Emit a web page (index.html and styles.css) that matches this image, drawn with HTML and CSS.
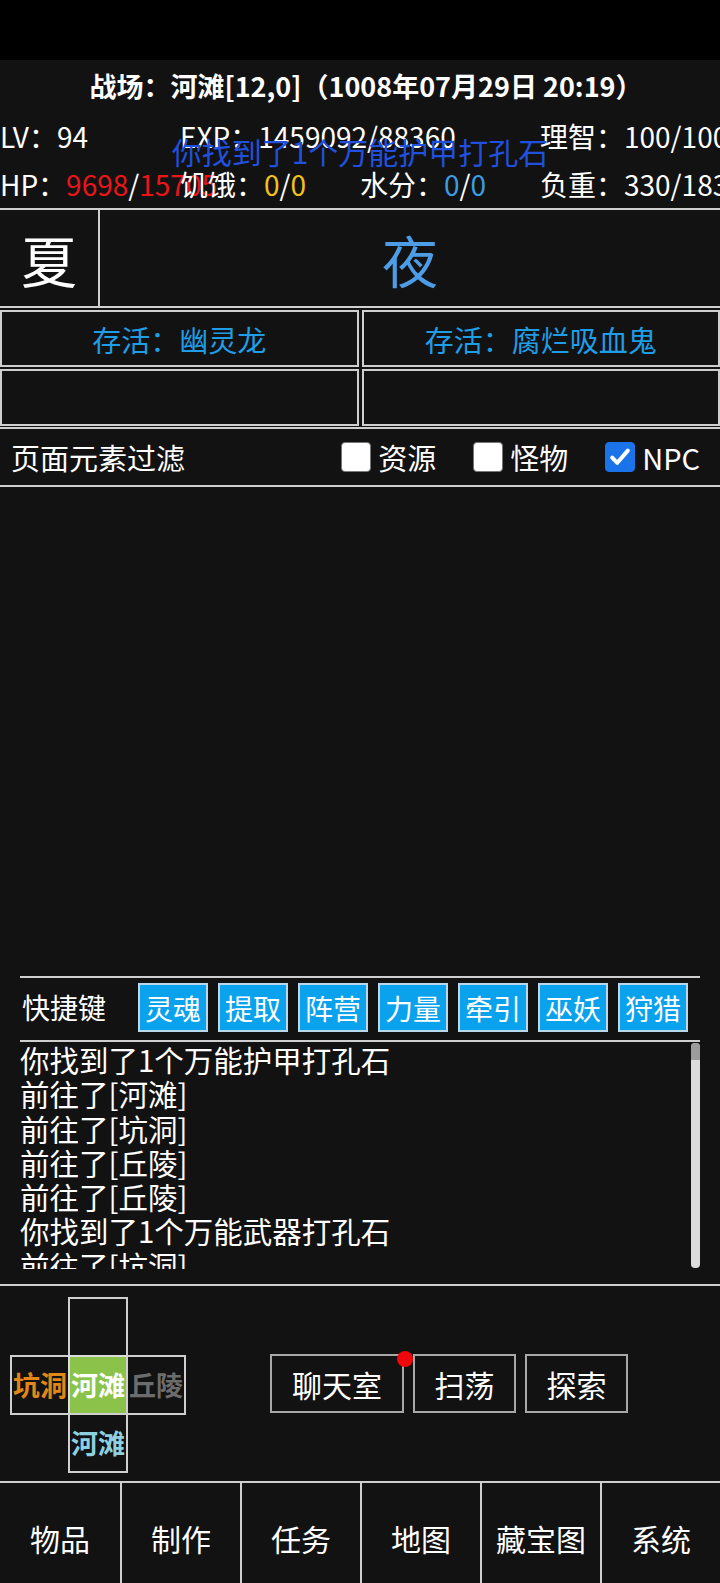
FILE: index.html
```html
<!DOCTYPE html>
<html lang="zh-CN">
<head>
<meta charset="utf-8">
<title>战场</title>
<link rel="stylesheet" href="styles.css">
</head>
<body>
<div class="statusbar"></div>
<header class="head">
  <div class="title">战场：河滩[12,0]（1008年07月29日 20:19）</div>
  <div class="stats">
    <div class="stat">LV：94</div>
    <div class="stat">EXP：1459092/88360</div>
    <div class="stat"></div>
    <div class="stat">理智：100/100</div>
    <div class="stat">HP：<span class="red">9698</span>/<span class="red">15705</span></div>
    <div class="stat">饥饿：<span class="yellow">0</span>/<span class="yellow">0</span></div>
    <div class="stat">水分：<span class="blue">0</span>/<span class="blue">0</span></div>
    <div class="stat">负重：330/1830</div>
  </div>
  <div class="toast">你找到了1个万能护甲打孔石</div>
</header>

<section class="season">
  <div class="season-cell">夏</div>
  <div class="time-cell">夜</div>
</section>

<section class="alive">
  <div class="alive-cell">存活：幽灵龙</div>
  <div class="alive-cell">存活：腐烂吸血鬼</div>
  <div class="alive-cell"></div>
  <div class="alive-cell"></div>
</section>

<section class="filter">
  <div class="filter-label">页面元素过滤</div>
  <div class="filter-opts">
    <label class="opt"><span class="box"></span>资源</label>
    <label class="opt"><span class="box"></span>怪物</label>
    <label class="opt"><span class="box checked"><svg viewBox="0 0 24 24" width="24" height="24"><path d="M4.2 12.6 L9.3 17.8 L19.8 5.6" fill="none" stroke="#fff" stroke-width="4" stroke-linecap="round" stroke-linejoin="round"/></svg></span>NPC</label>
  </div>
</section>

<section class="stage"></section>

<section class="shortcuts">
  <div class="sc-label">快捷键</div>
  <div class="sc-btns">
    <div class="sc-btn">灵魂</div>
    <div class="sc-btn">提取</div>
    <div class="sc-btn">阵营</div>
    <div class="sc-btn">力量</div>
    <div class="sc-btn">牵引</div>
    <div class="sc-btn">巫妖</div>
    <div class="sc-btn">狩猎</div>
  </div>
</section>

<section class="log">
  <div class="log-lines">
    <div>你找到了1个万能护甲打孔石</div>
    <div>前往了[河滩]</div>
    <div>前往了[坑洞]</div>
    <div>前往了[丘陵]</div>
    <div>前往了[丘陵]</div>
    <div>你找到了1个万能武器打孔石</div>
    <div>前往了[坑洞]</div>
  </div>
  <div class="scrollbar"><div class="thumb"></div></div>
</section>

<section class="mapbar">
  <div class="cross">
    <div class="cell c-top"></div>
    <div class="cell c-left">坑洞</div>
    <div class="cell c-mid">河滩</div>
    <div class="cell c-right">丘陵</div>
    <div class="cell c-bottom">河滩</div>
  </div>
  <div class="actions">
    <div class="act act-wide">聊天室<span class="dot"></span></div>
    <div class="act">扫荡</div>
    <div class="act">探索</div>
  </div>
</section>

<nav class="nav">
  <div class="nav-item">物品</div>
  <div class="nav-item">制作</div>
  <div class="nav-item">任务</div>
  <div class="nav-item">地图</div>
  <div class="nav-item">藏宝图</div>
  <div class="nav-item">系统</div>
</nav>
</body>
</html>
```

FILE: styles.css
```css
html, body {
  margin: 0;
  padding: 0;
}
body {
  width: 720px;
  height: 1583px;
  overflow: hidden;
  background: #121212;
  color: #fff;
  font-family: "Noto Sans CJK SC", "Noto Sans", sans-serif;
}
.statusbar {
  height: 60px;
  background: #000;
}
.head {
  position: relative;
  border-bottom: 2px solid #cfcfcf;
}
.title {
  height: 52px;
  line-height: 52px;
  text-align: center;
  padding-left: 12px;
  font-size: 27px;
  font-weight: 700;
  white-space: nowrap;
}
.stats {
  display: grid;
  grid-template-columns: repeat(4, 180px);
  grid-auto-rows: 48px;
}
.stat {
  font-size: 28px;
  line-height: 48px;
  white-space: nowrap;
}
.red { color: #e8161b; }
.yellow { color: #f2c21b; }
.blue { color: #3b9ce6; }
.toast {
  position: absolute;
  left: 0;
  right: 0;
  top: 73px;
  text-align: center;
  font-size: 30px;
  line-height: 36px;
  color: #2150df;
  white-space: nowrap;
}
.season {
  display: flex;
  height: 96px;
  border-bottom: 2px solid #cfcfcf;
}
.season-cell {
  width: 98px;
  border-right: 2px solid #cfcfcf;
  display: flex;
  align-items: center;
  justify-content: center;
  font-size: 56px;
}
.time-cell {
  flex: 1;
  display: flex;
  align-items: center;
  justify-content: center;
  font-size: 56px;
  color: #4d9de6;
}
.alive {
  display: grid;
  grid-template-columns: 1fr 1fr;
  grid-auto-rows: 57px;
  gap: 2px 3px;
  padding-top: 2px;
  border-bottom: 2px solid #cfcfcf;
  padding-bottom: 1px;
}
.alive-cell {
  border: 2px solid #cfcfcf;
  display: flex;
  align-items: center;
  justify-content: center;
  font-size: 29px;
  color: #1f9ee6;
}
.filter {
  display: flex;
  align-items: center;
  justify-content: space-between;
  height: 56px;
  padding: 0 20px 0 11px;
  border-bottom: 2px solid #cfcfcf;
}
.filter-label {
  font-size: 29px;
}
.filter-opts {
  display: flex;
  gap: 37px;
}
.opt {
  display: flex;
  align-items: center;
  gap: 7px;
  font-size: 29px;
}
.box {
  width: 30px;
  height: 30px;
  box-sizing: border-box;
  border-radius: 4px;
  background: #fff;
  border: 1px solid #777;
  display: flex;
  align-items: center;
  justify-content: center;
}
.box.checked {
  background: #1a73e8;
  border-color: #1a73e8;
}
.stage {
  height: 489px;
}
.shortcuts {
  margin: 0 20px;
  border-top: 2px solid #cfcfcf;
  display: flex;
  align-items: flex-start;
  height: 64px;
  box-sizing: border-box;
  padding-top: 5px;
}
.sc-label {
  font-size: 28px;
  line-height: 49px;
  padding-left: 2px;
  width: 116px;
}
.sc-btns {
  display: flex;
  gap: 10px;
}
.sc-btn {
  width: 70px;
  height: 49px;
  box-sizing: border-box;
  background: #0aa2ec;
  border: 2px solid #b9d9ea;
  display: flex;
  align-items: center;
  justify-content: center;
  font-size: 28px;
  color: #fff;
}
.log {
  margin: 0 20px;
  border-top: 2px solid #cfcfcf;
  height: 227px;
  display: flex;
  overflow: hidden;
}
.log-lines {
  flex: 1;
  font-size: 29.5px;
  line-height: 34.3px;
}
.log-lines div {
  white-space: nowrap;
}
.scrollbar {
  width: 9px;
  margin-top: 1px;
  height: 225px;
  background: #dcdcdc;
  border-radius: 4px;
  overflow: hidden;
}
.thumb {
  height: 17px;
  background: #9c9c9c;
}
.mapbar {
  border-top: 2px solid #cfcfcf;
  margin-top: 15px;
  height: 195px;
  display: flex;
  align-items: center;
}
.cross {
  display: grid;
  grid-template-columns: repeat(3, 58px);
  grid-template-rows: repeat(3, 58px);
  margin-left: 11px;
  margin-top: 2px;
}
.cell {
  margin: -1px;
  border: 2px solid #cfcfcf;
  display: flex;
  align-items: center;
  justify-content: center;
  font-size: 27px;
  font-weight: 700;
  white-space: nowrap;
}
.c-top { grid-column: 2; grid-row: 1; }
.c-left { grid-column: 1; grid-row: 2; color: #e08718; }
.c-mid { grid-column: 2; grid-row: 2; background: #8bc34a; color: #fff; border-color: #dcdcdc; }
.c-right { grid-column: 3; grid-row: 2; color: #6c6c6c; }
.c-bottom { grid-column: 2; grid-row: 3; color: #8dd0e0; }
.actions {
  display: flex;
  gap: 9px;
  margin-left: 85px;
}
.act {
  position: relative;
  width: 103px;
  height: 59px;
  box-sizing: border-box;
  border: 2px solid #a8a8a8;
  display: flex;
  align-items: center;
  justify-content: center;
  font-size: 30px;
}
.act-wide { width: 134px; }
.dot {
  position: absolute;
  right: -11px;
  top: -5px;
  width: 16px;
  height: 16px;
  border-radius: 50%;
  background: #f0070b;
}
.nav {
  border-top: 2px solid #cfcfcf;
  display: grid;
  grid-template-columns: repeat(6, 1fr);
  height: 110px;
}
.nav-item {
  display: flex;
  align-items: center;
  justify-content: center;
  border-left: 2px solid #cfcfcf;
  font-size: 30px;
}
.nav-item:first-child { border-left: none; }
```
